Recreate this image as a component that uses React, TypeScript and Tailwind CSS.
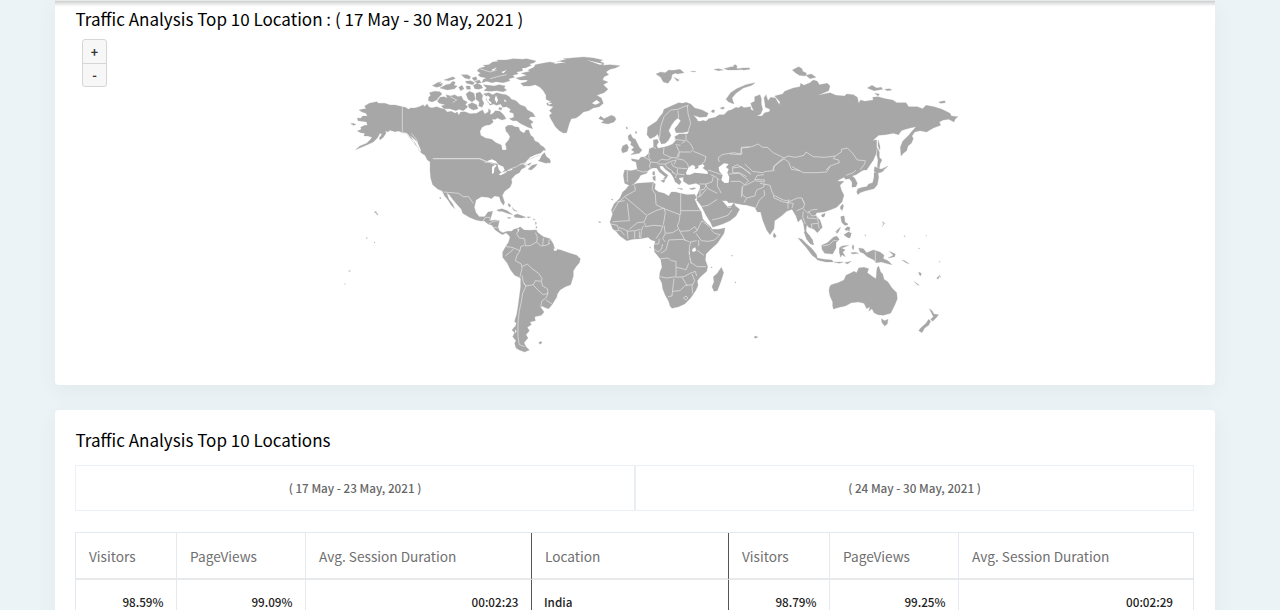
import React from "react";

type Region = {
  x: number;
  y: number;
  land: string[];
  water?: string[];
  borders?: string[];
};

// Every region is drawn at three units per pixel from its own origin.
const regions: Region[] = [
  {
    // Alaska, Canada and the Arctic islands
    x: 340,
    y: 50,
    land: [
      "M272 362 L270 335 262 330 255 316 243 308 238 294 226 284 222 272 212 264 204 252 198 248 187 248 176 243 165 245 150 241 143 246 136 242 138 250 130 262 120 270 118 264 126 252 120 250 112 264 100 276 82 284 64 292 47 299 60 288 80 280 92 268 96 262 84 258 72 258 74 250 62 248 52 243 64 238 62 232 74 226 82 226 80 216 66 214 54 212 52 204 62 205 68 198 82 198 78 190 66 186 57 180 70 177 78 176 74 168 88 160 110 155 116 160 135 160 150 165 165 165 187 170 196 172 205 178 212 174 225 174 238 170 250 164 252 170 262 162 266 170 275 174 290 170 300 174 314 178 322 186 334 184 345 190 352 186 356 196 362 186 375 185 390 191 410 190 420 184 428 180 434 192 445 186 446 176 452 182 450 194 462 190 470 198 466 208 456 208 460 216 450 224 438 226 426 232 420 244 422 256 436 264 455 268 468 278 484 285 487 302 494 309 499 306 499 292 496 282 506 270 510 260 504 250 498 244 496 232 504 226 516 226 524 230 536 232 540 242 552 250 558 240 566 240 572 256 580 262 584 272 596 278 602 286 612 292 617 300 606 310 590 314 575 318 560 320 548 330 540 362Z",
      "M32 221 L40 220 48 224 40 226Z",
      "M265 152 L266 142 272 136 268 128 284 124 300 125 306 132 296 142 290 150 276 156Z",
      "M292 154 L300 142 312 140 322 144 318 134 332 138 344 134 354 140 364 138 370 150 382 156 376 164 384 170 370 182 356 178 348 182 330 176 312 176 304 168 316 164 298 160Z",
      "M277 107 L292 98 304 95 298 102 308 100 304 108 290 112Z M300 114 L318 104 330 102 338 94 346 97 342 106 352 108 344 116 322 120Z M312 90 L340 80 346 86 326 92Z M356 112 L366 106 372 116 362 122Z M364 74 L382 74 392 80 388 88 374 84Z M376 94 L392 92 404 98 398 104 380 100Z M378 108 L390 108 392 118 380 118Z M396 84 L408 80 412 88 402 92Z",
      "M400 106 L412 100 424 106 428 114 416 118 404 116Z M404 94 L418 90 424 98 412 100Z M378 132 L388 124 402 130 406 148 396 156 384 148Z M408 130 L420 126 428 136 426 148 432 160 426 172 416 168 418 156 408 148Z M384 164 L396 158 410 164 414 176 400 180 388 174Z",
      "M430 104 L446 106 462 108 478 104 496 108 492 114 500 120 490 125 470 122 452 124 432 122 440 114Z",
      "M411 62 L420 54 436 50 430 46 446 44 458 36 476 34 470 30 500 30 520 26 548 28 560 26 588 33 582 38 568 42 574 46 556 54 546 54 548 62 530 66 534 72 518 76 524 82 506 86 510 92 490 98 468 95 456 98 440 94 426 98 430 88 440 84 420 80 414 74 422 70Z",
      "M430 132 L446 128 458 134 470 128 484 132 498 134 508 140 514 148 528 152 540 164 556 170 562 180 578 188 586 200 572 200 566 206 580 216 572 222 578 236 564 232 552 226 540 220 530 212 518 212 508 206 522 202 520 190 508 186 512 178 500 170 488 172 482 162 470 166 460 162 450 166 444 156 438 148 444 142Z",
      "M456 194 L466 182 480 184 492 196 498 206 486 210 472 204 466 208Z M478 172 L486 174 484 180 476 178Z",
      "M594 332 L604 314 614 310 612 322 628 326 632 336 618 340 606 336Z",
    ],
    water: [
      "M442 136 L450 142 446 150 456 160 450 162 440 150Z M492 148 L500 154 494 156Z M468 136 L474 150 470 160 464 148Z M484 66 L500 60 490 70Z M454 60 L470 52 460 64Z",
      "M210 256 L232 276 244 304 238 300 226 280Z",
    ],
    borders: [
      "M187 170 L187 248 200 250 208 262 222 280 234 292 238 304",
      "M280 326 L418 326 432 332 444 336",
      "M214 250 L226 264 234 276 M330 140 L350 150 338 158 M420 56 L450 66 470 60 M450 86 L480 78 500 74",
    ],
  },
  {
    // United States, Mexico, the Caribbean and South America
    x: 420,
    y: 150,
    land: [
      "M5 0 L20 12 32 28 30 60 32 84 38 104 54 118 66 122 74 138 84 150 94 166 104 176 98 162 86 146 80 128 88 134 98 148 112 164 124 178 128 190 148 202 168 210 182 213 192 212 204 222 216 226 226 240 240 250 248 254 258 248 266 256 276 258 274 244 262 244 248 248 238 242 234 230 238 212 226 210 210 212 214 198 218 184 204 186 194 200 178 200 168 188 163 172 168 150 184 140 204 142 214 146 224 138 238 140 242 154 250 166 254 158 247 136 254 124 270 112 276 98 274 88 286 74 298 68 304 58 316 52 320 44 328 46 338 34 328 32 346 18 358 10 374 4 376 0Z",
      "M324 58 L336 46 352 42 346 50 334 60Z",
      "M360 24 L366 12 372 4 378 18 390 30 390 40 380 34 364 34Z",
      "M230 180 L246 176 262 182 278 194 262 190 246 184 236 184Z M282 196 L292 192 308 198 318 202 304 204 284 202Z M262 202 L274 203 266 206Z M322 200 L332 201 324 204Z M266 160 L272 166 270 172 264 166Z M276 172 L284 180 292 184 282 182Z M340 206 l5 2 -3 3Z M346 216 l4 2 -3 6Z M348 228 l3 4 -3 4Z M346 240 l6 2 -4 5Z M58 144 l4 -2 1 4Z",
      "M264 248 L272 246 282 238 296 234 300 230 312 240 330 241 346 240 356 250 370 260 390 266 400 282 404 296 422 300 450 310 470 316 481 326 478 338 468 350 460 362 460 378 452 404 436 410 420 420 412 432 410 442 396 464 386 476 378 474 366 468 362 472 372 486 364 496 344 500 346 512 330 516 334 524 322 532 328 542 318 554 324 564 312 578 318 590 328 600 314 606 298 600 288 594 284 580 288 572 278 560 284 548 276 540 286 528 284 512 290 494 294 470 298 440 302 410 302 384 284 376 272 360 262 340 248 322 248 306 256 292 266 276 270 262Z",
      "M356 578 l7 -4 3 4 -6 5Z M536 214 l4 2 -2 3Z",
    ],
    water: [
      "M192 38 L204 32 216 28 228 34 234 42 222 40 208 36Z",
      "M216 50 L226 44 230 48 223 54 222 68 216 72Z",
      "M232 42 L250 50 254 60 244 68 236 58Z",
      "M236 73 L248 66 262 62 258 68 242 76Z M264 60 L278 56 276 60 264 63Z",
      "M400 296 L410 295 412 300 404 304Z M292 236 l6 2 -2 8Z",
      "M310 44 L330 22 346 14 362 10 368 4 372 0 378 4 366 14 358 30 340 36 328 40 318 46Z",
      "M283 515 l6 4 -4 12Z M286 538 l4 6 -5 6Z",
    ],
    borders: [
      "M38 26 L180 26 204 36 226 44 M250 70 L268 58 290 50 302 42 320 40",
      "M300 44 L314 38 316 52 M324 30 L346 20 360 16",
      "M70 126 L96 128 116 130 130 140 146 140 160 160",
      "M190 212 L196 202 210 202 210 212 M206 222 L220 214 238 212 M222 232 L236 234",
      "M296 238 L290 252 298 264 314 266 316 288 332 286 350 276 352 260 346 248",
      "M350 276 L362 288 378 286 390 280 M370 264 L368 286 M388 268 L386 282",
      "M258 290 L276 292 300 302 302 290 312 286 M256 318 L276 302 280 296",
      "M300 302 L290 318 286 332 304 342 306 356 300 380",
      "M306 350 L322 342 336 356 356 370 366 386 364 394 346 392 340 404 318 408 310 396 306 376",
      "M364 394 L368 408 382 416 384 430 370 434 362 428 340 406",
      "M384 430 L378 444 366 452 362 470 M378 450 L396 462",
      "M310 400 L318 408 308 430 304 456 298 482 294 520 294 560 298 584 314 590",
    ],
  },
  {
    // Greenland and Iceland
    x: 500,
    y: 50,
    land: [
      "M48 84 L66 80 80 76 64 70 90 64 84 60 102 52 106 44 128 40 150 36 170 40 174 34 200 28 190 26 250 21 280 24 308 30 300 34 312 40 310 46 330 44 360 47 346 54 330 58 318 66 326 74 312 80 308 90 324 96 310 104 324 118 312 128 290 136 304 144 310 160 298 170 280 174 266 182 250 186 240 196 228 204 214 206 208 220 200 248 190 249 178 242 166 230 158 216 152 206 148 196 156 190 148 182 160 170 142 166 140 160 154 156 138 148 138 136 130 122 120 112 106 104 90 108 70 108 62 100 78 96 84 90 60 90Z",
      "M296 206 L302 198 312 206 334 196 344 200 348 208 342 216 324 222 304 218 312 212Z",
    ],
    water: [
      "M276 160 L290 150 300 158 286 164Z M144 158 L158 160 146 164Z",
      "M160 42 L178 34 200 40 186 38Z M260 30 L310 42 300 44Z",
    ],
  },
  {
    // Europe
    x: 600,
    y: 60,
    land: [
      "M452 140 L432 143 424 138 412 146 396 150 384 152 372 164 358 164 346 172 326 176 318 184 306 180 296 184 286 172 280 166 300 172 320 170 325 160 306 150 284 144 272 132 258 127 248 130 236 128 214 138 192 148 188 160 178 172 170 184 154 194 143 202 141 224 150 236 164 230 173 222 178 238 184 252 196 250 206 240 213 226 206 212 214 196 224 182 234 174 242 182 234 194 224 206 228 218 248 218 268 214 262 222 238 222 224 230 228 240 218 252 204 258 190 262 174 265 170 256 176 246 172 238 160 240 161 262 148 266 146 280 136 290 122 292 116 300 94 296 96 302 108 306 112 328 92 332 74 330 70 346 74 370 84 374 90 379 104 370 116 356 122 346 140 340 146 330 158 324 170 324 178 336 196 350 190 356 198 356 204 346 196 340 182 328 178 318 188 318 196 328 212 340 220 352 226 366 238 374 244 366 236 354 250 352 250 364 266 374 288 370 300 376 300 396 290 422 452 422Z",
      "M84 228 L92 222 98 234 106 238 112 250 118 262 126 270 118 280 92 284 104 276 94 270 102 262 92 254 94 246 86 240Z M68 258 L80 252 86 262 82 274 68 279 64 270Z",
      "M168 42 L182 36 196 38 206 30 222 32 228 38 216 44 214 56 204 70 190 66 182 52Z M214 32 L240 28 252 38 232 42Z M222 52 L238 60 232 64Z M272 34 l16 0 -6 2Z M342 28 L356 26 370 30 354 32Z M372 26 L394 20 410 24 404 30 384 30Z M400 16 L408 14 412 20 404 20Z M424 26 L448 24 450 28 430 30Z",
      "M158 336 L164 334 164 346 158 344Z M158 350 L166 348 166 362 160 360Z M182 362 L196 358 192 368Z M268 386 l14 -3 6 2 -12 4Z M232 384 l16 2 -2 3Z M78 200 l6 4 -4 4Z M106 214 l5 2 -3 6Z M336 150 l8 0 -2 8 -8 -2Z M360 144 l10 -3 4 3 -6 4Z",
    ],
    water: [
      "M258 338 L266 322 278 314 286 320 284 328 296 324 294 318 308 312 314 318 308 324 322 334 324 342 300 340 284 338 270 344 260 344Z",
      "M356 322 L372 310 386 312 378 322 386 328 382 338 388 352 386 368 374 370 364 360 368 346 358 334Z",
      "M416 306 l6 4 -4 6Z M290 182 L300 184 320 176 304 178Z",
    ],
    borders: [
      "M178 236 L182 200 192 170 212 150 234 148 252 140 266 136",
      "M234 152 L236 174 M262 136 L264 160 272 190 264 214",
      "M258 224 L258 240 272 252 280 268 272 276 238 276 230 258 M222 238 L256 242 M226 254 L242 256 M244 250 L256 244",
      "M192 262 L190 282 212 292 230 294 236 278 M162 262 L168 266",
      "M280 274 L300 282 318 290 314 306 306 310 M230 296 L250 300 262 310 266 322 M238 276 L236 292",
      "M130 290 L148 300 152 308 148 318 152 326 M148 278 L146 292 152 300 M152 306 L172 308 184 298 202 300 214 294 M172 312 L196 312 212 304 230 300",
      "M196 312 L200 322 214 330 222 340 M214 308 L218 318 232 324 262 326 M228 302 L222 314 M232 326 L232 342 254 344 M216 336 L230 344 226 354",
      "M110 330 L128 336 144 334 M82 332 L82 366",
      "M448 262 L424 264 426 282 400 278 366 284 354 294 358 306",
      "M324 330 L348 338 364 344 M332 344 L346 350 358 360 M298 372 L318 372 336 366 340 350 M316 372 L324 386 352 400 M300 390 L312 388 320 374 M352 356 L352 378 364 400",
      "M396 322 L412 314 440 332 452 340 M398 322 L398 338 418 338 440 350 M386 342 L418 340 446 362 428 380 424 412",
    ],
  },
  {
    // Africa and Arabia
    x: 600,
    y: 170,
    land: [
      "M85 48 L96 46 112 40 136 38 160 37 166 42 164 58 176 66 192 70 206 78 214 66 226 66 240 70 262 74 284 73 290 84 284 88 294 110 304 126 308 146 318 158 332 170 336 178 356 178 375 174 372 190 352 220 332 238 318 252 316 270 323 290 320 304 300 322 292 332 294 346 288 360 272 384 254 402 236 410 216 415 210 408 206 394 196 376 188 356 186 340 178 324 180 306 186 292 182 268 164 246 162 228 166 214 154 210 144 202 122 206 98 208 80 212 60 198 48 184 38 176 30 156 38 132 34 120 42 102 60 84 68 66 78 58Z",
      "M290 78 L298 60 310 40 452 40 452 104 430 104 408 100 398 97 386 99 376 86 364 76 354 70 358 84 370 96 382 110 394 108 402 98 406 108 419 118 408 138 390 152 368 162 338 172 332 158 318 136 304 108 292 92Z",
      "M364 292 L371 308 362 336 352 362 342 364 336 350 342 336 340 320 352 310Z",
      "M33 88 l6 0 -1 3Z M395 255 l3 2 -3 2Z M405 335 l3 2 -3 2Z M333 290 l4 2 -3 2Z M149 231 l3 1 -2 3Z M0 155 l2 1 -2 3Z",
    ],
    water: ["M278 236 L286 232 288 242 280 246 276 242Z M266 244 l4 4 -2 8Z M270 262 l2 10 -3 -4Z"],
    borders: [
      "M104 46 L106 62 76 78 54 98 38 126",
      "M74 92 L50 96 M74 80 L140 136 168 122 192 114 196 128 190 164 M82 100 L88 152 52 154 38 156",
      "M160 38 L156 58 166 72 168 104 192 116 240 134 M242 70 L242 134 M242 122 L304 122",
      "M240 134 L238 152 232 168 240 184 256 212 M140 138 L132 156 112 158 88 178 M134 158 L136 170 160 166 188 168 184 182 168 206 M130 168 L124 182 122 206",
      "M192 166 L196 190 218 188 234 178 M196 190 L188 206 196 216 M206 210 L198 240 182 250 M206 210 L250 208 268 216",
      "M240 184 L268 182 284 170 292 182 280 188 M292 180 L306 152 330 172 M288 190 L304 212 326 214 M332 178 L344 190 360 194 344 210 326 214",
      "M272 216 L268 232 268 256 274 280 M270 216 L290 212 M296 210 L296 228 M290 240 L312 256 M270 276 L292 290 318 290",
      "M182 266 L204 264 214 272 228 274 228 292 248 296 258 300 266 280 M228 292 L228 320 200 324 180 320 M228 322 L252 320 270 310 286 304 290 318",
      "M222 326 L218 360 216 378 204 380 M218 364 L240 362 256 346 278 344 M246 322 L262 348 M276 312 L284 332 276 348 278 370 M250 384 l8 -6 6 6 -6 6Z",
      "M162 222 L176 222 178 206 M164 238 L174 246 184 238 188 222 M32 162 L52 166 56 180 M44 182 L62 182 74 196 M56 172 L82 182 84 206 M80 184 L104 182 104 206 M104 182 L122 178 M118 184 L118 204",
      "M304 110 L324 106 352 88 M336 150 L360 144 384 136 396 120 M382 112 L394 112 M290 82 L302 78 320 56 M300 60 L300 80",
    ],
  },
  {
    // Northern Asia
    x: 730,
    y: 60,
    land: [
      "M0 152 L18 142 34 146 50 144 72 152 66 142 62 130 74 124 74 110 90 104 94 116 94 132 98 148 92 162 80 168 96 168 104 158 118 155 120 148 106 142 104 126 102 114 108 104 114 122 122 112 136 114 148 134 150 126 134 108 158 102 164 94 190 84 210 80 212 70 222 76 240 68 250 60 262 64 268 74 292 70 300 78 296 92 264 106 300 98 318 106 344 108 350 102 370 104 382 112 386 130 392 120 404 124 430 120 428 112 444 110 466 116 488 120 500 128 528 128 536 140 562 140 578 146 588 136 612 140 636 148 660 160 664 168 684 170 676 176 672 186 656 178 640 180 628 186 632 196 610 204 590 216 570 212 554 216 546 228 550 236 544 250 534 258 530 272 520 280 513 288 511 262 518 244 536 226 546 214 558 200 540 204 526 208 514 212 506 224 490 220 466 224 446 226 430 240 408 258 424 264 440 262 438 280 428 302 410 330 0 330Z",
      "M75 68 L48 74 20 86 2 98 -12 118 -4 126 12 132 6 114 18 100 40 84 66 76Z",
      "M187 30 L206 20 216 26 218 34 230 40 226 48 208 46 196 38Z M228 46 L244 42 258 52 240 56Z M412 84 L426 76 440 84 454 82 458 88 432 92Z M464 88 L478 86 486 90 472 92Z M434 100 L448 102 444 108Z M626 126 L644 122 646 128 632 130Z M0 26 L16 16 22 26 40 24 56 24 46 28 18 30Z",
      "M443 264 L448 276 448 292 456 300 450 312 448 324 442 322 444 300 440 284Z M440 334 L462 324 474 318 464 328 448 336Z",
    ],
    borders: [
      "M0 282 L32 284 34 262 66 260 84 252 98 262 112 262 130 278 162 294 174 288 196 292 222 286 228 276 250 290 284 292 316 288 334 276 334 268 352 264 368 280 382 300 406 302 404 312 390 330",
      "M128 330 L134 318 162 296 176 306 184 328 210 332 M288 330 L300 318 328 308 326 300 310 296 316 288",
    ],
  },
  {
    // Southern and eastern Asia
    x: 720,
    y: 140,
    land: [
      "M34 40 L470 0 470 25 468 40 460 60 440 85 424 94 408 104 396 108 404 114 412 130 408 140 396 142 396 126 388 116 376 118 372 112 356 120 352 124 372 124 360 136 364 150 372 166 366 186 350 202 330 210 312 216 290 218 286 226 300 240 307 262 292 278 282 268 266 262 260 254 258 272 268 290 282 314 270 310 260 294 254 274 250 250 244 236 234 246 228 228 216 208 200 214 184 228 164 242 162 266 150 284 140 270 128 240 122 216 112 216 104 202 76 194 50 190 30 186Z",
      "M162 278 L169 288 164 294 159 288Z",
      "M410 156 L414 146 428 142 440 140 446 132 458 128 462 112 462 98 474 96 476 112 472 134 462 146 446 150 432 154 420 158 414 164Z M462 94 L464 80 484 88 492 92 480 98 470 98Z M475 0 L480 20 480 30 474 18Z",
      "M368 194 L371 198 366 212 362 204Z M305 224 L316 220 312 230 306 230Z M362 230 L372 228 374 246 384 252 378 256 366 248Z M382 260 L390 262 388 274 380 266Z M372 284 L386 276 392 286 386 294 376 288Z M346 276 l14 -14 -6 12Z",
    ],
    borders: [
      "M74 72 L98 94 126 98 140 94 162 92 160 80 180 62 190 56",
      "M38 84 L64 80 92 104 M32 124 L60 124 76 136 104 122 132 126 134 120 104 118 112 106 132 104 M66 140 L66 164 80 174 72 188 M80 174 L104 168 110 150 130 142 134 130 M120 130 L150 136 156 156 162 166 190 180 210 184 232 174 246 174 252 190 M106 206 L118 180 134 166 132 150 M160 166 L162 174 190 186 206 188 206 178",
      "M204 186 L204 206 M206 188 L220 190 216 204 M246 176 L254 190 250 204 230 212 M250 206 L264 220 274 210 292 208 M264 212 L276 228 290 226 296 250 M250 214 L248 230 256 252 M264 226 L262 234 290 236 M274 252 L276 266 M274 252 L294 250 298 266 M216 80 L250 98 290 98 320 96 330 80 M378 106 L400 98 408 90",
    ],
  },
  {
    // South-east Asia and Oceania
    x: 780,
    y: 200,
    land: [
      "M54 114 L66 118 80 132 96 146 110 164 112 178 96 166 80 144 64 126Z",
      "M72 96 L78 96 88 106 98 120 100 134 92 132 80 118Z",
      "M110 174 L132 178 156 180 160 186 138 186 112 180Z M162 186 L174 186 190 186 178 190Z M194 188 L214 184 202 192Z",
      "M125 136 L142 128 160 112 170 108 178 118 168 128 168 144 158 162 134 160 126 148Z",
      "M178 144 L186 138 206 136 192 142 184 144 196 150 188 156 196 170 186 164 182 172 178 158Z M218 134 l4 4 -2 12 -4 -6Z M212 158 l14 -1 10 3 -18 2Z",
      "M236 144 L250 146 260 158 280 150 300 156 312 166 310 176 324 182 336 194 318 190 304 186 288 188 282 180 262 170 250 160 240 156Z M328 154 L346 162 344 170 324 174 340 166Z",
      "M366 180 L374 182 388 192 378 188Z M416 216 l8 4 -2 8 -4 -4Z M402 244 l16 12 -6 -2Z M470 234 l10 -8 -4 8 -2 4Z M310 66 l4 4 -8 10 5 -8Z M254 106 l3 -2 0 4Z M372 107 l4 1 -3 2Z M416 144 l3 1 -3 2Z M478 184 l3 1 -3 2Z M438 106 l2 1 -2 1Z",
      "M184 50 L192 48 194 66 204 74 194 76 186 66Z M194 88 L200 82 204 90 200 92Z M194 104 L206 96 214 100 210 114 200 110Z M168 100 l14 -18 -8 16Z",
      "M182 18 L189 12 186 28 181 26Z M125 46 L134 42 132 50 126 50Z",
      "M149 260 L154 254 174 248 192 240 198 226 214 218 222 214 230 218 236 204 252 202 266 206 262 218 278 230 288 236 291 204 296 198 302 216 308 222 312 238 324 246 336 264 350 278 352 296 344 316 332 340 310 346 294 344 282 338 276 326 266 334 270 320 260 326 252 310 236 306 214 308 196 318 178 322 160 327 158 318 158 306 150 288 147 272Z",
      "M304 356 L314 362 324 358 322 372 314 378 306 368Z",
      "M448 326 L456 332 462 342 476 344 468 354 458 364 452 358 460 350Z M446 358 L452 364 446 376 434 384 426 398 416 392 422 384 438 370Z",
      "M-78 412 l4 -4 8 3 -8 4Z",
    ],
    borders: ["M286 154 L286 188 M128 138 L148 134 160 122 172 122"],
  },
];

function WorldMap() {
  return (
    <svg className="block h-[310px] w-[640px]" viewBox="340 50 640 310">
      {regions.map((r, i) => (
        <g key={i} transform={`translate(${r.x} ${r.y}) scale(0.33333)`} strokeLinejoin="round">
          {r.land.map((d, n) => (
            <path key={n} d={d} fill="#a7a7a7" stroke="#a7a7a7" strokeWidth="0.8" />
          ))}
          {r.water?.map((d, n) => (
            <path key={n} d={d} fill="#fff" />
          ))}
        </g>
      ))}
      {regions.map((r, i) => (
        <g key={i} transform={`translate(${r.x} ${r.y}) scale(0.33333)`}>
          {r.borders?.map((d, n) => (
            <path key={n} d={d} fill="none" stroke="#dedede" strokeWidth="2.4" strokeLinejoin="round" />
          ))}
        </g>
      ))}
      {/* scattered Pacific islands */}
      <path
        d="M374 212l2-1 1 2-1 .5z M376 213l2.500 1-1.500 1.500z M366 237.500h1.500v1h-1.500z M348.500 270.500h2v1h-2z M344.500 283.500h1v1h-1z M374 242h1v1h-1z M882 221.500l1.500.5-1 1z M939 275l2 2-1 .5z"
        fill="#b4b4b4"
      />
    </svg>
  );
}

const heads = "pt-[2px] pl-[13px] pr-3 text-[13.65px] text-[#6f6f6f]";
const cells = "pr-[12.5px] pl-3 text-[11.7px] font-medium text-[#222]";

export default function App() {
  return (
    <div className="h-[610px] overflow-hidden bg-[#ebf3f7] pr-[65px] pl-[55px] font-['Noto_Sans_CJK_SC',sans-serif] text-black">
      <section className="h-[385px] rounded-b bg-white shadow-[0_6px_20px_rgba(80,80,80,0.06)]">
        <div className="h-[8px] border-t border-[#e4e9eb] bg-linear-to-b from-[#cfcfcf] to-white to-80%" />
        <h2 className="-mt-px h-[25px] pl-[20.5px] text-[17.05px] leading-[24px] whitespace-nowrap">
          Traffic Analysis Top 10 Location : ( 17 May - 30 May, 2021 )
        </h2>
        <div className="flex pt-[7px] pl-[27px]">
          <div className="flex h-[48px] w-[25px] flex-col rounded-[3px] border border-[#d6d6d6] bg-[#f7f7f7] text-center text-[12.5px] font-bold text-[#333]">
            <button className="h-[24px] border-b border-[#d6d6d6] leading-[22px]">+</button>
            <button className="h-[22px] leading-[22px]">-</button>
          </div>
          <div className="ml-[233px] pt-[11px]">
            <WorldMap />
          </div>
        </div>
      </section>

      <section className="mt-[25px] h-[260px] rounded bg-white px-[20px] pt-[18px] shadow-[0_6px_20px_rgba(80,80,80,0.06)]">
        <h2 className="h-[25px] pl-[0.5px] text-[17.05px] leading-[24px]">Traffic Analysis Top 10 Locations</h2>
        <div className="mt-[12px] mr-px grid h-[46px] grid-cols-[560px_1fr] border border-[#ebf1f5] text-center text-[11.7px] leading-[44px] font-medium text-[#666]">
          <div className="border-r-2 border-[#e8eef4]">( 17 May - 23 May, 2021 )</div>
          <div>( 24 May - 30 May, 2021 )</div>
        </div>
        <table className="mt-[21px] w-[1119px] table-fixed border-separate border-spacing-0 border-t border-l border-[#e3e9f0] text-left">
          <colgroup>
            <col className="w-[101px]" />
            <col className="w-[129px]" />
            <col className="w-[226px]" />
            <col className="w-[197px]" />
            <col className="w-[101px]" />
            <col className="w-[129px]" />
            <col className="w-[235px]" />
          </colgroup>
          <thead>
            <tr className="h-[47px] [&>th]:border-r [&>th]:border-b-2 [&>th]:border-r-[#e3e9f0] [&>th]:border-b-[#e7e9ea] [&>th]:font-normal [&>th:nth-child(3)]:border-r-[#555] [&>th:nth-child(4)]:border-r-[#555]">
              <th className={heads}>Visitors</th>
              <th className={heads}>PageViews</th>
              <th className={heads}>Avg. Session Duration</th>
              <th className={heads}>Location</th>
              <th className={heads}>Visitors</th>
              <th className={heads}>PageViews</th>
              <th className={heads}>Avg. Session Duration</th>
            </tr>
          </thead>
          <tbody>
            <tr className="h-[44px] text-right [&>td]:border-r [&>td]:border-[#e3e9f0] [&>td:nth-child(3)]:border-[#555] [&>td:nth-child(4)]:border-[#555]">
              <td className={cells}>98.59%</td>
              <td className={cells}>99.09%</td>
              <td className={cells}>00:02:23</td>
              <td className={cells + " text-left"}>India</td>
              <td className={cells}>98.79%</td>
              <td className={cells}>99.25%</td>
              <td className="pr-[20px] pl-3 text-[11.7px] font-medium text-[#222]">00:02:29</td>
            </tr>
          </tbody>
        </table>
      </section>
    </div>
  );
}
